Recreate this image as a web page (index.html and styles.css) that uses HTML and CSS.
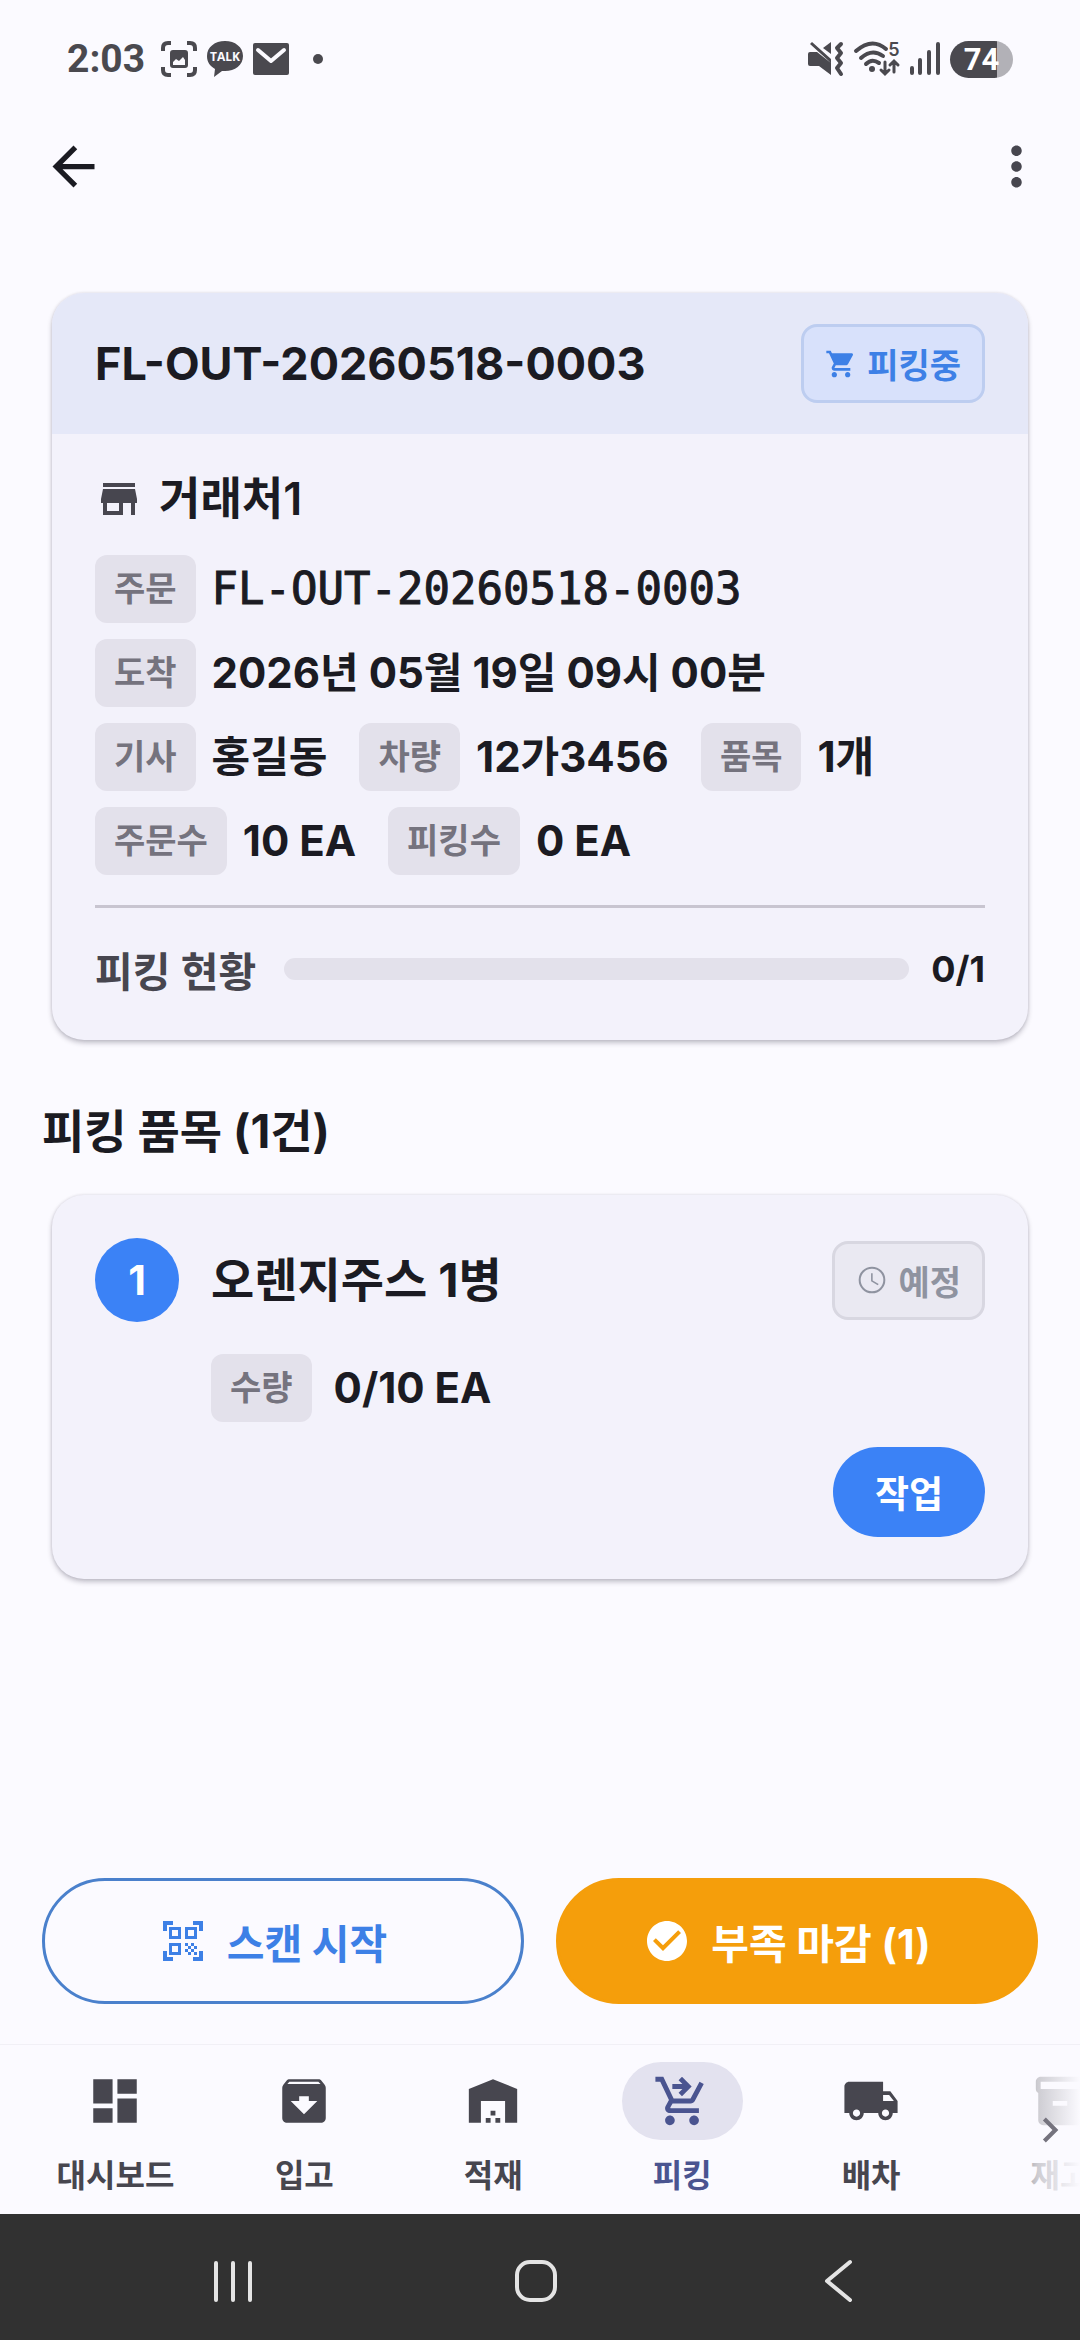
FILE: index.html
```html
<!DOCTYPE html>
<html lang="ko">
<head>
  <meta charset="UTF-8" />
  <meta name="viewport" content="width=device-width, initial-scale=1.0"/>
  <title>피킹 상세</title>
  <link rel="stylesheet" href="styles.css">
</head>
<body>

  <div class="status-bar">
    <div class="status-left">
      <span class="clock">2:03</span>
      <svg class="status-icon" viewBox="0 0 36 36">
        <path d="M2 10V7q0-5 5-5h3M26 2h3q5 0 5 5v3M34 26v3q0 5-5 5h-3M10 34H7q-5 0-5-5v-3" fill="none" stroke="currentColor" stroke-width="4"/>
        <path d="M12 9h12q3 0 3 3v12q0 3-3 3H12q-3 0-3-3V12q0-3 3-3zM12 24h12v-5l-2-3-4 4-3-2-3 3z" fill="currentColor" fill-rule="evenodd"/>
      </svg>
      <svg class="status-icon" viewBox="0 0 36 36">
        <path d="M18 0c10 0 18 6 18 15s-8 15-18 15h-3l-8 6 1-8C3 25 0 21 0 15 0 6 8 0 18 0z" fill="currentColor"/>
        <text class="talk" x="18" y="20" text-anchor="middle">TALK</text>
      </svg>
      <svg class="status-icon" viewBox="0 0 36 36">
        <rect x="0" y="2" width="36" height="32" rx="2" fill="currentColor"/>
        <path d="M5 9l13 11L31 9" fill="none" stroke="#fbfaff" stroke-width="4" stroke-linecap="round" stroke-linejoin="round"/>
      </svg>
      <span class="dot"></span>
    </div>
    <div class="status-right">
      <svg class="status-icon" viewBox="0 0 36 36">
        <path d="M0 13q0-2 2-2h7l14 11v12L11 25H2q-2 0-2-2zM15 7l8-6v12zM2 3l2-2 19 17v4z" fill="currentColor"/>
        <path d="M33 3l-4 4 4 5-4 5 4 5-4 5 4 6" fill="none" stroke="currentColor" stroke-width="4" stroke-linecap="round" stroke-linejoin="round"/>
      </svg>
      <svg class="wifi-icon" viewBox="0 0 46 36">
        <g fill="none" stroke="currentColor" stroke-width="4" stroke-linecap="round">
          <path d="M2 10q16-14 30-2M7 17q11-10 22-2M12 23q6-6 13-1"/>
          <path d="M31 21v11m-4-3l4 4 4-4M40 31V20m-4 4l4-4 4 4" stroke-width="3"/>
        </g>
        <circle cx="18" cy="28" r="3" fill="currentColor"/>
        <text class="band" x="40" y="15" text-anchor="middle">5</text>
      </svg>
      <svg class="signal-icon" viewBox="0 0 30 36">
        <path d="M2 27v5M10 19v13M19 11v21M28 3v29" fill="none" stroke="currentColor" stroke-width="4" stroke-linecap="round"/>
      </svg>
      <span class="battery">74</span>
    </div>
  </div>

  <header class="app-bar">
    <button class="icon-button" type="button" aria-label="뒤로">
      <svg viewBox="0 0 24 24"><path d="M20 11H7.83l5.59-5.59L12 4l-8 8 8 8 1.41-1.41L7.83 13H20v-2z"/></svg>
    </button>
    <button class="icon-button more" type="button" aria-label="더보기">
      <svg viewBox="0 0 24 24"><path d="M12 8c1.1 0 2-.9 2-2s-.9-2-2-2-2 .9-2 2 .9 2 2 2zm0 2c-1.1 0-2 .9-2 2s.9 2 2 2 2-.9 2-2-.9-2-2-2zm0 6c-1.1 0-2 .9-2 2s.9 2 2 2 2-.9 2-2-.9-2-2-2z"/></svg>
    </button>
  </header>

  <main class="content">
    <section class="card">
      <div class="card-header">
        <h1 class="order-title">FL-OUT-20260518-0003</h1>
        <span class="badge badge-active">
          <svg viewBox="0 0 24 24"><path d="M7 18c-1.1 0-1.99.9-1.99 2S5.9 22 7 22s2-.9 2-2-.9-2-2-2zM1 2v2h2l3.6 7.59-1.35 2.45c-.16.28-.25.61-.25.96 0 1.1.9 2 2 2h12v-2H7.42c-.14 0-.25-.11-.25-.25l.03-.12.9-1.63h7.45c.75 0 1.41-.41 1.75-1.03l3.58-6.49c.08-.14.12-.31.12-.48 0-.55-.45-1-1-1H5.21l-.94-2H1zm16 16c-1.1 0-1.99.9-1.99 2s.89 2 1.99 2 2-.9 2-2-.9-2-2-2z"/></svg>
          피킹중
        </span>
      </div>
      <div class="card-body">
        <div class="partner">
          <svg viewBox="0 0 24 24"><path d="M20 4H4v2h16V4zm1 10v-2l-1-5H4l-1 5v2h1v6h10v-6h4v6h2v-6h1zm-9 4H6v-4h6v4z"/></svg>
          거래처1
        </div>
        <div class="info">
          <div class="info-row">
            <div class="field"><span class="chip">주문</span><span class="value mono">FL-OUT-20260518-0003</span></div>
          </div>
          <div class="info-row">
            <div class="field"><span class="chip">도착</span><span class="value">2026년 05월 19일 09시 00분</span></div>
          </div>
          <div class="info-row">
            <div class="field"><span class="chip">기사</span><span class="value">홍길동</span></div>
            <div class="field"><span class="chip">차량</span><span class="value">12가3456</span></div>
            <div class="field"><span class="chip">품목</span><span class="value">1개</span></div>
          </div>
          <div class="info-row">
            <div class="field"><span class="chip">주문수</span><span class="value">10 EA</span></div>
            <div class="field"><span class="chip">피킹수</span><span class="value">0 EA</span></div>
          </div>
        </div>
        <hr class="divider">
        <div class="progress-row">
          <label class="progress-label" for="pickProgress">피킹 현황</label>
          <progress class="progress-bar" id="pickProgress" value="0" max="1"></progress>
          <span class="progress-count">0/1</span>
        </div>
      </div>
    </section>

    <h2 class="section-title">피킹 품목 (1건)</h2>

    <section class="card item-card">
      <div class="item-head">
        <span class="item-no">1</span>
        <h3 class="item-name">오렌지주스 1병</h3>
        <span class="badge badge-idle">
          <svg viewBox="0 0 24 24"><path d="M12 2a10 10 0 100 20 10 10 0 000-20zm0 18.500a8.500 8.500 0 110-17 8.500 8.500 0 010 17zM12.500 7h-1.200v6l5 3 .7-1-4.500-2.700z"/></svg>
          예정
        </span>
      </div>
      <div class="item-qty">
        <span class="chip">수량</span><span class="value">0/10 EA</span>
      </div>
      <div class="item-actions">
        <button class="work-button" type="button">작업</button>
      </div>
    </section>
  </main>

  <div class="action-bar">
    <button class="action outline" type="button">
      <svg viewBox="0 0 24 24"><path d="M9.500 6.500v3h-3v-3h3M11 5H5v6h6V5zm-1.500 9.500v3h-3v-3h3M11 13H5v6h6v-6zm6.500-6.500v3h-3v-3h3M19 5h-6v6h6V5zm-6 8h1.500v1.500H13V13zm1.500 1.500H16V16h-1.500v-1.500zM16 13h1.500v1.500H16V13zm-3 3h1.500v1.500H13V16zm1.500 1.500H16V19h-1.500v-1.500zM16 16h1.500v1.500H16V16zm1.500-1.500H19V16h-1.500v-1.500zm0 3H19V19h-1.500v-1.500zM22 7h-2V4h-3V2h5v5zm0 15v-5h-2v3h-3v2h5zM2 22h5v-2H4v-3H2v5zM2 2v5h2V4h3V2H2z"/></svg>
      스캔 시작
    </button>
    <button class="action filled" type="button">
      <svg viewBox="0 0 24 24"><path d="M12 2C6.480 2 2 6.480 2 12s4.480 10 10 10 10-4.480 10-10S17.520 2 12 2zm-2 15l-5-5 1.410-1.410L10 14.170l7.590-7.590L19 8l-9 9z"/></svg>
      부족 마감 (1)
    </button>
  </div>

  <nav class="bottom-nav">
    <a class="nav-item" href="#dashboard">
      <span class="nav-icon"><svg viewBox="0 0 24 24"><path d="M3 13h8V3H3v10zm0 8h8v-6H3v6zm10 0h8V11h-8v10zm0-18v6h8V3h-8z"/></svg></span>
      대시보드
    </a>
    <a class="nav-item" href="#inbound">
      <span class="nav-icon"><svg viewBox="0 0 24 24"><path d="M20.540 5.230l-1.390-1.680C18.880 3.210 18.470 3 18 3H6c-.47 0-.88.21-1.160.55L3.460 5.230C3.170 5.570 3 6.020 3 6.500V19c0 1.100.9 2 2 2h14c1.100 0 2-.9 2-2V6.500c0-.48-.17-.93-.46-1.270zM12 17.500L6.500 12H10v-2h4v2h3.500L12 17.500zM5.120 5l.81-1h12l.94 1H5.120z"/></svg></span>
      입고
    </a>
    <a class="nav-item" href="#loading">
      <span class="nav-icon"><svg viewBox="0 0 24 24"><path d="M22 21V7L12 3 2 7v14h5v-9h10v9h5zm-11-2H9v2h2v-2zm2-3h-2v2h2v-2zm2 3h-2v2h2v-2z"/></svg></span>
      적재
    </a>
    <a class="nav-item active" href="#picking" aria-current="page">
      <span class="nav-icon"><svg viewBox="0 0 24 24"><path d="M7 18c-1.100 0-1.990.9-1.990 2S5.900 22 7 22s2-.9 2-2-.9-2-2-2zm10 0c-1.100 0-1.990.9-1.990 2s.89 2 1.990 2 2-.9 2-2-.9-2-2-2zm-9.830-3.250l.03-.12.9-1.630h7.450c.75 0 1.410-.41 1.750-1.030L21 4.960 19.250 4l-3.700 7H8.530L4.270 2H1v2h2l3.600 7.590-1.350 2.450c-.16.28-.25.61-.25.96 0 1.100.9 2 2 2h12v-2H7.420c-.13 0-.25-.11-.25-.25zM8 7h4.170l-1.590 1.590L12 10l4-4-4-4-1.410 1.410L12.170 5H8z"/></svg></span>
      피킹
    </a>
    <a class="nav-item" href="#dispatch">
      <span class="nav-icon"><svg viewBox="0 0 24 24"><path d="M20 8h-3V4H3c-1.100 0-2 .9-2 2v11h2c0 1.660 1.340 3 3 3s3-1.340 3-3h6c0 1.660 1.340 3 3 3s3-1.340 3-3h2v-5l-3-4zM6 18.500c-.83 0-1.500-.67-1.500-1.500s.67-1.500 1.500-1.500 1.500.67 1.500 1.500-.67 1.500-1.500 1.500zm13.500-9l1.960 2.500H17V9.500h2.500zm-1.500 9c-.83 0-1.500-.67-1.500-1.500s.67-1.500 1.500-1.500 1.500.67 1.500 1.500-.67 1.500-1.500 1.500z"/></svg></span>
      배차
    </a>
    <a class="nav-item" href="#stock">
      <span class="nav-icon"><svg viewBox="0 0 24 24"><path d="M20 2H4c-1 0-2 .9-2 2v3.010c0 .72.43 1.340 1 1.690V20c0 1.100 1.100 2 2 2h14c.9 0 2-.9 2-2V8.700c.57-.35 1-.97 1-1.690V4c0-1.100-1-2-2-2zm-5 12H9v-2h6v2zm5-7H4V4h16v3z"/></svg></span>
      재고
    </a>
    <span class="nav-fade">
      <svg viewBox="0 0 24 24"><path d="M10 6L8.590 7.410 13.170 12l-4.580 4.590L10 18l6-6z"/></svg>
    </span>
  </nav>

  <div class="system-nav">
    <button type="button" aria-label="최근 앱">
      <svg viewBox="0 0 48 48"><path d="M6 6v37M23 6v37M40 6v37"/></svg>
    </button>
    <button type="button" aria-label="홈">
      <svg viewBox="0 0 48 48"><rect x="5" y="5" width="38" height="38" rx="13"/></svg>
    </button>
    <button type="button" aria-label="뒤로 가기">
      <svg viewBox="0 0 48 48"><path d="M36 5L13 24l23 19"/></svg>
    </button>
  </div>

</body>
</html>
```

FILE: styles.css
```css
* {
  box-sizing: border-box;
}
body {
  margin: 0;
  min-height: 100vh;
  display: flex;
  flex-direction: column;
  background-color: #fbfaff;
  color: #1b1b22;
  font-family: Inter, "Noto Sans CJK KR", sans-serif;
  font-weight: 600;
}
button {
  font: inherit;
  border: none;
  background: none;
  padding: 0;
  cursor: pointer;
}
svg {
  fill: currentColor;
  flex-shrink: 0;
}
h1, h2, h3 {
  margin: 0;
  font-weight: 700;
}

/* status bar */
.status-bar {
  display: flex;
  justify-content: space-between;
  align-items: center;
  height: 118px;
  padding: 0 67px;
  color: #4a494f;
}
.status-left, .status-right {
  display: flex;
  align-items: center;
  gap: 10px;
}
.clock {
  font-family: Roboto, sans-serif;
  font-size: 39px;
  font-weight: 700;
  margin-right: 6px;
}
.status-icon {
  width: 36px;
  height: 36px;
}
.talk {
  font-family: "Open Sans", sans-serif;
  font-size: 12px;
  font-weight: 700;
  fill: #fbfaff;
}
.band {
  font-family: Inter, sans-serif;
  font-size: 18px;
  font-weight: 600;
}
.dot {
  width: 10px;
  height: 10px;
  margin-left: 14px;
  border-radius: 50%;
  background-color: currentColor;
}
.wifi-icon {
  width: 46px;
  height: 36px;
  overflow: visible;
}
.signal-icon {
  width: 30px;
  height: 36px;
}
.battery {
  width: 63px;
  height: 37px;
  border-radius: 19px;
  background: linear-gradient(to right, #4a494f 74%, #b2b1b7 74%);
  color: #fff;
  font-family: Roboto, sans-serif;
  font-size: 31px;
  font-weight: 700;
  line-height: 37px;
  text-align: center;
}

/* app bar */
.app-bar {
  display: flex;
  justify-content: space-between;
  align-items: center;
  height: 96px;
  padding: 0 32px 0 42px;
}
.icon-button {
  width: 63px;
  height: 63px;
  color: #1b1b22;
}
.icon-button svg {
  display: block;
}
.more {
  color: #47464f;
}

/* cards */
.content {
  flex: 1;
  padding: 79px 42px 0;
}
.card {
  margin: 0 10px;
  border-radius: 32px;
  background-color: #f3f2fb;
  box-shadow: 0 3px 5px rgba(30, 28, 50, 0.25), 0 0 3px rgba(30, 28, 50, 0.12);
  overflow: hidden;
}
.card-header {
  display: flex;
  justify-content: space-between;
  align-items: center;
  padding: 31px 43px;
  background-color: #e5e8f8;
}
.order-title {
  font-size: 45px;
  line-height: 56px;
}
.badge {
  display: flex;
  align-items: center;
  gap: 10px;
  height: 79px;
  padding: 0 21px;
  border: 3px solid;
  border-radius: 16px;
  font-size: 34px;
}
.badge svg {
  width: 32px;
  height: 32px;
}
.badge-active {
  color: #3d80e6;
  background-color: #d8e1fb;
  border-color: #bdcdf0;
}
.badge-idle {
  color: #8f93a0;
  background-color: #eae9f2;
  border-color: #d8d7e1;
}
.card-body {
  padding: 41px 43px 47px;
}
.partner {
  display: flex;
  align-items: center;
  gap: 16px;
  height: 48px;
  margin-bottom: 32px;
  font-size: 45px;
  line-height: 48px;
}
.partner svg {
  width: 48px;
  height: 48px;
  color: #47464f;
}
.info {
  display: flex;
  flex-direction: column;
  gap: 16px;
}
.info-row {
  display: flex;
  flex-wrap: wrap;
  gap: 32px;
}
.field {
  display: flex;
  align-items: center;
  gap: 16px;
}
.chip {
  padding: 0 19px;
  border-radius: 12px;
  background-color: #e3e1eb;
  color: #75737e;
  font-size: 34px;
  line-height: 68px;
}
.value {
  font-size: 42px;
  font-weight: 700;
  line-height: 68px;
}
.mono {
  font-family: "DejaVu Sans Mono", monospace;
  font-size: 44px;
  font-weight: 400;
  -webkit-text-stroke: 1px currentColor;
}
.divider {
  height: 3px;
  margin: 30px 0 37px;
  border: none;
  background-color: #c8c5d0;
}
.progress-row {
  display: flex;
  align-items: center;
  height: 48px;
}
.progress-label {
  color: #47464f;
  font-size: 41px;
}
.progress-bar {
  flex: 1;
  height: 22px;
  margin: 0 22px 0 28px;
  appearance: none;
  border: none;
  border-radius: 11px;
  background-color: #e3e1eb;
  overflow: hidden;
}
.progress-bar::-webkit-progress-bar {
  background-color: #e3e1eb;
}
.progress-bar::-webkit-progress-value {
  background-color: #3b82f6;
}
.progress-count {
  font-size: 36px;
  font-weight: 700;
}
.section-title {
  margin: 61px 0 34px;
  font-size: 46px;
  line-height: 60px;
}

/* picking item */
.item-card {
  padding: 43px 43px 42px;
}
.item-head {
  display: flex;
  align-items: center;
}
.item-no {
  width: 84px;
  height: 84px;
  border-radius: 50%;
  background-color: #3b82f6;
  color: #fff;
  font-size: 41px;
  font-weight: 700;
  line-height: 84px;
  text-align: center;
}
.item-name {
  flex: 1;
  margin-left: 32px;
  font-size: 47px;
  line-height: 60px;
}
.item-qty {
  display: flex;
  align-items: center;
  gap: 22px;
  margin: 32px 0 25px 116px;
}
.item-actions {
  display: flex;
  justify-content: flex-end;
}
.work-button {
  height: 90px;
  padding: 0 42px;
  border-radius: 45px;
  background-color: #3b82f6;
  color: #fff;
  font-size: 37px;
}

/* bottom actions */
.action-bar {
  display: flex;
  gap: 32px;
  padding: 0 42px 40px;
}
.action {
  flex: 1;
  display: flex;
  justify-content: center;
  align-items: center;
  gap: 20px;
  height: 126px;
  padding-right: 20px;
  border: 3px solid;
  border-radius: 63px;
  font-size: 41px;
  font-weight: 700;
}
.action svg {
  width: 48px;
  height: 48px;
}
.outline {
  border-color: #4a80cc;
  color: #3d80e6;
}
.filled {
  border-color: #f59e0b;
  background-color: #f59e0b;
  color: #fff;
}

/* tab navigation */
.bottom-nav {
  position: relative;
  display: flex;
  padding: 17px 21px 20px;
  border-top: 1px solid #f1f0f6;
  overflow: hidden;
}
.nav-item {
  flex: 0 0 18.2%;
  display: flex;
  flex-direction: column;
  align-items: center;
  gap: 18px;
  color: #47464f;
  font-size: 32px;
  line-height: 36px;
  text-decoration: none;
}
.nav-icon {
  display: flex;
  justify-content: center;
  align-items: center;
  width: 121px;
  height: 78px;
  border-radius: 39px;
}
.nav-icon svg {
  width: 58px;
  height: 58px;
}
.active {
  color: #4a5490;
}
.active .nav-icon {
  background-color: #e3e2ef;
}
.nav-fade {
  position: absolute;
  top: 0;
  right: 0;
  bottom: 0;
  display: flex;
  justify-content: flex-end;
  align-items: center;
  width: 84px;
  padding-right: 5px;
  background: linear-gradient(to right, rgba(251, 250, 255, 0), rgba(251, 250, 255, 0.75) 50%, #fbfaff);
  color: #75737e;
}
.nav-fade svg {
  width: 50px;
  height: 50px;
}

/* android buttons */
.system-nav {
  display: flex;
  justify-content: center;
  gap: 254px;
  padding: 43px 9px 35px 0;
  background-color: #313131;
}
.system-nav button {
  width: 48px;
  height: 48px;
  color: #e4e4e4;
}
.system-nav svg {
  display: block;
  fill: none;
  stroke: currentColor;
  stroke-width: 4;
  stroke-linecap: round;
  stroke-linejoin: round;
}
```
